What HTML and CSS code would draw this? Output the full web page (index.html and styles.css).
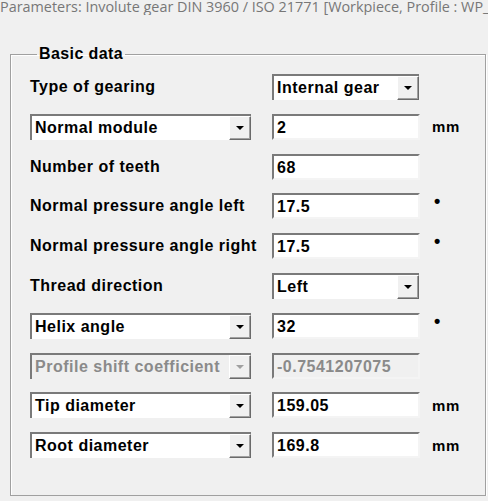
FILE: index.html
```html
<!DOCTYPE html>
<html lang="en">
<head>
  <meta charset="UTF-8">
  <title>Parameters: Involute gear</title>
  <link rel="stylesheet" href="styles.css">
</head>
<body>

  <div class="title">Parameters: Involute gear DIN 3960 / ISO 21771 [Workpiece, Profile : WP_1]</div>

  <fieldset class="group">
    <legend>Basic data</legend>

    <div class="row">
      <div class="label">Type of gearing</div>
      <div class="combo small"><span class="value">Internal gear</span><span class="drop"></span></div>
    </div>

    <div class="row">
      <div class="combo wide"><span class="value">Normal module</span><span class="drop"></span></div>
      <div class="field">2</div>
      <div class="unit">mm</div>
    </div>

    <div class="row">
      <div class="label">Number of teeth</div>
      <div class="field">68</div>
    </div>

    <div class="row">
      <div class="label">Normal pressure angle left</div>
      <div class="field">17.5</div>
      <div class="unit deg">•</div>
    </div>

    <div class="row">
      <div class="label">Normal pressure angle right</div>
      <div class="field">17.5</div>
      <div class="unit deg">•</div>
    </div>

    <div class="row">
      <div class="label">Thread direction</div>
      <div class="combo small"><span class="value">Left</span><span class="drop"></span></div>
    </div>

    <div class="row">
      <div class="combo wide"><span class="value">Helix angle</span><span class="drop"></span></div>
      <div class="field">32</div>
      <div class="unit deg">•</div>
    </div>

    <div class="row">
      <div class="combo wide disabled"><span class="value">Profile shift coefficient</span><span class="drop"></span></div>
      <div class="field disabled">-0.7541207075</div>
    </div>

    <div class="row">
      <div class="combo wide"><span class="value">Tip diameter</span><span class="drop"></span></div>
      <div class="field">159.05</div>
      <div class="unit">mm</div>
    </div>

    <div class="row">
      <div class="combo wide"><span class="value">Root diameter</span><span class="drop"></span></div>
      <div class="field">169.8</div>
      <div class="unit">mm</div>
    </div>
  </fieldset>

</body>
</html>
```

FILE: styles.css
```css
body {
  margin: 0;
  background: #f0f0f0;
  color: #000;
  font-family: "Liberation Sans", Arial, sans-serif;
  overflow: hidden;
}

.title {
  margin-top: -2px;
  height: 17px;
  white-space: nowrap;
  overflow: hidden;
  font-family: "Open Sans", "Noto Sans", sans-serif;
  font-size: 14.4px;
  line-height: 18px;
  color: #777;
}

.group {
  margin: 30px 0 0 10px;
  padding: 11px 0 0 19px;
  width: 455px;
  height: 438px;
  border: 1px solid #a0a0a0;
  box-shadow: 1px 1px 0 #fff, inset 1px 1px 0 #fff;
}

.group legend {
  margin-left: 7px;
  padding: 0 2px 0 2px;
  font-size: 16px;
  font-weight: bold;
  line-height: 18px;
  letter-spacing: 0.4px;
}

.row {
  display: flex;
  align-items: center;
  height: 26px;
  margin-bottom: 13.8px;
  font-size: 16px;
  font-weight: bold;
  letter-spacing: 0.5px;
}

.label {
  width: 221px;
  margin-right: 21px;
  white-space: nowrap;
}

.field, .combo {
  box-sizing: border-box;
  height: 26px;
  background: #fff;
  border: 2px solid;
  border-color: #7a7a7a #f4f4f4 #f4f4f4 #7a7a7a;
  white-space: nowrap;
  overflow: hidden;
}

.field {
  width: 148px;
  padding: 2px 0 0 3px;
  line-height: 20px;
}

.combo {
  display: flex;
  width: 147px;
  border-right: 0;
  border-bottom: 0;
}

.combo.wide {
  width: 221px;
  margin-right: 21px;
}

.combo .value {
  flex: 1;
  padding: 2px 0 0 3px;
  line-height: 20px;
  overflow: hidden;
}

.combo .drop {
  position: relative;
  width: 20px;
  background: #f0f0f0;
  border: 1px solid;
  border-color: #fff #6a6a6a #6a6a6a #fff;
  box-shadow: inset -1px -1px 0 #a0a0a0;
}

.combo .drop::after {
  content: "";
  position: absolute;
  left: 6px;
  top: 9px;
  border-left: 4px solid transparent;
  border-right: 4px solid transparent;
  border-top: 4px solid #000;
}

.combo.disabled, .field.disabled {
  background: #f0f0f0;
  color: #8a8a8a;
}

.combo.disabled .drop::after {
  border-top-color: #a0a0a0;
}

.unit {
  margin-left: 12px;
  font-size: 15px;
  letter-spacing: 0.6px;
}

.unit.deg {
  align-self: flex-start;
  margin-left: 14px;
  font-size: 18px;
  line-height: 16px;
}
```
